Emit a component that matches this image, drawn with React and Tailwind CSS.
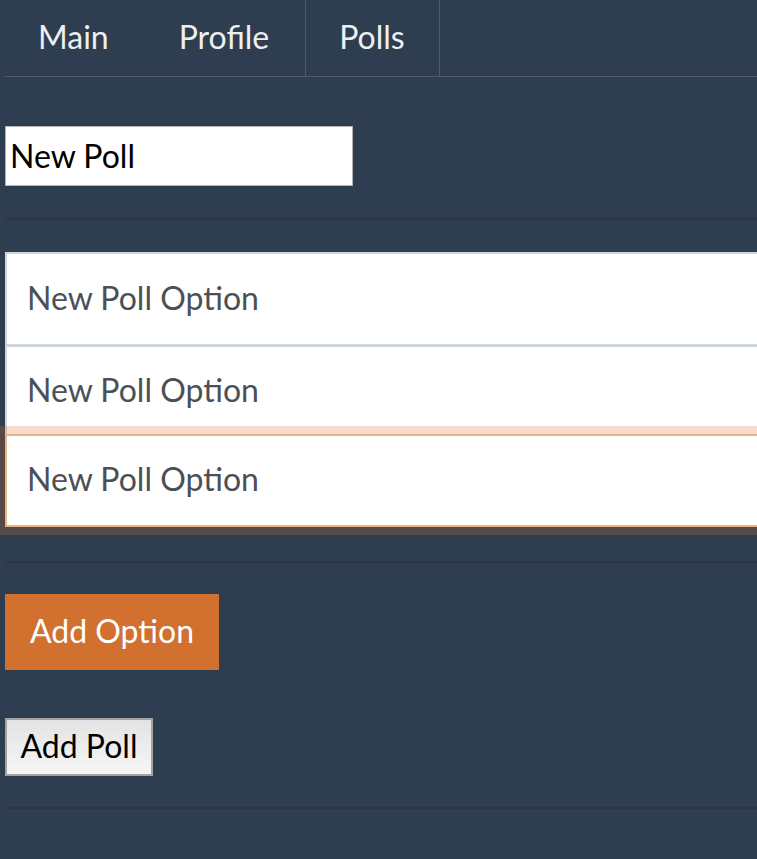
import { useState } from 'react'

const tabs = [
  { label: 'Main', cls: 'pl-[33px] pr-[35px]' },
  { label: 'Profile', cls: 'pl-[35px] pr-[36px] border-r border-[#4d5b6b]' },
  { label: 'Polls', cls: 'pl-[33px] pr-[34px] border-r border-[#4d5b6b]' }
]

export default function App() {
  const [title, setTitle] = useState('New Poll')
  const [options] = useState(['New Poll Option', 'New Poll Option', 'New Poll Option'])

  return (
    <div
      className="min-h-[859px] bg-[#2e3d4f] pl-[5px] overflow-hidden"
      style={{ fontFamily: 'Lato, "Open Sans", sans-serif' }}
    >
      {/* Nav tabs */}
      <ul className="flex h-[77px] border-b border-[#4d5b6b]">
        {tabs.map((t) => (
          <li
            key={t.label}
            className={`flex items-center text-[32px] text-[#ecf0f1] pb-[3px] ${t.cls}`}
          >
            {t.label}
          </li>
        ))}
      </ul>

      {/* Poll title */}
      <div className="pt-[49px]">
        <input
          value={title}
          onChange={(e) => setTitle(e.target.value)}
          className="w-[348px] h-[60px] bg-white border border-[#b3b3b3] outline-none pl-[4px] pb-[2px] text-[32px] text-black"
        />
      </div>

      <hr className="mt-[32px] border-0 border-t-2 border-[#283646]" />

      {/* Options */}
      <div className="mt-[32px] flex flex-col w-[800px]">
        {options.map((o, i) => (
          <div
            key={i}
            className={
              i === 2
                ? 'relative -mt-[3px] h-[93px] bg-white border-2 border-[#edb386] shadow-[0_0_0_8px_rgba(210,112,47,0.25)] flex items-center px-[20px] text-[32px] text-[#4b5056]'
                : `relative h-[93px] bg-white border-[#cfd5dc] border-l-2 ${i > 0 ? '-mt-[1px] border-t-[3px]' : 'border-t-2'} flex items-center px-[20px] text-[32px] text-[#4b5056]`
            }
          >
            <span className="pb-[4px]">{o}</span>
          </div>
        ))}
      </div>

      <hr className="mt-[34px] border-0 border-t-2 border-[#283646]" />

      {/* Actions */}
      <button className="mt-[31px] block w-[214px] h-[76px] bg-[#d2702f] text-white text-[32px] pb-[2px]">
        Add Option
      </button>

      <button className="mt-[48px] block w-[148px] h-[58px] border-2 border-[#a3a3a3] bg-gradient-to-b from-[#e3e3e3] to-[#f6f6f6] text-black text-[32px] pb-[2px]">
        Add Poll
      </button>

      <hr className="mt-[31px] border-0 border-t-2 border-[#283646]" />
    </div>
  )
}
